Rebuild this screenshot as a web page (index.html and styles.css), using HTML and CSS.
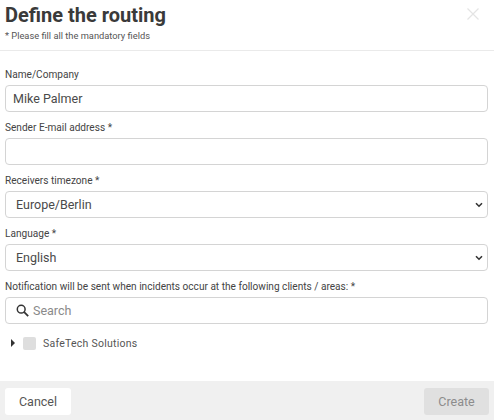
FILE: index.html
```html
<!DOCTYPE html>
<html lang="en">
<head>
    <meta charset="UTF-8">
    <meta name="viewport" content="width=device-width, initial-scale=1.0">
    <title>Define the routing</title>
    <link rel="stylesheet" href="styles.css">
</head>
<body>
    <div class="modal">
        <div class="modal-header">
            <div>
                <h1>Define the routing</h1>
                <p class="hint">* Please fill all the mandatory fields</p>
            </div>
            <svg class="close-icon" width="12" height="12" viewBox="0 0 12 12">
                <path d="M0.5 0.5L11.5 11.5M11.5 0.5L0.5 11.5" stroke="#e4e4e4" stroke-width="1.2" fill="none"/>
            </svg>
        </div>

        <div class="modal-body">
            <div class="field">
                <label>Name/Company</label>
                <input class="control" type="text" value="Mike Palmer">
            </div>
            <div class="field">
                <label>Sender E-mail address *</label>
                <input class="control" type="text">
            </div>
            <div class="field">
                <label>Receivers timezone *</label>
                <div class="control select-box">
                    <span>Europe/Berlin</span>
                    <svg width="8" height="6" viewBox="0 0 8 6"><path d="M1 1.2L4 4.2L7 1.2" stroke="#333" stroke-width="1.6" fill="none"/></svg>
                </div>
            </div>
            <div class="field">
                <label>Language *</label>
                <div class="control select-box">
                    <span>English</span>
                    <svg width="8" height="6" viewBox="0 0 8 6"><path d="M1 1.2L4 4.2L7 1.2" stroke="#333" stroke-width="1.6" fill="none"/></svg>
                </div>
            </div>
            <div class="field">
                <label>Notification will be sent when incidents occur at the following clients / areas: *</label>
                <div class="control search-box">
                    <svg width="13" height="13" viewBox="0 0 13 13"><circle cx="5.2" cy="5.2" r="3.9" stroke="#333" stroke-width="1.5" fill="none"/><path d="M8.2 8.2L12.2 12.2" stroke="#333" stroke-width="1.8"/></svg>
                    <span>Search</span>
                </div>
            </div>
            <div class="tree-row">
                <span class="caret"></span>
                <span class="checkbox"></span>
                <span class="tree-label">SafeTech Solutions</span>
            </div>
        </div>

        <div class="modal-footer">
            <button class="btn">Cancel</button>
            <button class="btn btn-disabled">Create</button>
        </div>
    </div>
</body>
</html>
```

FILE: styles.css
```css
body {
    margin: 0;
    font-family: 'Roboto', 'Liberation Sans', sans-serif;
    color: #444;
    background-color: #fff;
}

.modal {
    width: 494px;
    height: 420px;
    display: flex;
    flex-direction: column;
    overflow: hidden;
}

.modal-header {
    height: 51px;
    box-sizing: border-box;
    border-bottom: 1px solid #eaeaea;
    padding: 0 15px 0 5px;
    display: flex;
    justify-content: space-between;
    align-items: flex-start;
}

h1 {
    margin: 1px 0 0;
    font-size: 20px;
    line-height: 28px;
    font-weight: 700;
    color: #3a3a3a;
}

.hint {
    margin: 1px 0 0;
    font-size: 9.3px;
    line-height: 12px;
    color: #555;
}

.close-icon {
    margin-top: 8px;
}

.modal-body {
    flex: 1;
    padding: 17px 6px 0 5px;
}

.field {
    margin-bottom: 9px;
}

label {
    display: block;
    font-size: 10.1px;
    line-height: 13px;
    margin-bottom: 4px;
    color: #444;
}

.control {
    display: flex;
    align-items: center;
    width: 100%;
    height: 27px;
    box-sizing: border-box;
    border: 1px solid #d4d4d4;
    border-radius: 4px;
    background-color: #fff;
    font-family: inherit;
    font-size: 12.5px;
    color: #4a4a4a;
    outline: none;
}

input.control {
    padding: 0 7px;
}

.select-box {
    justify-content: space-between;
    padding: 0 4px 0 10px;
}

.search-box {
    gap: 4px;
    padding: 0 10px;
}

.search-box span {
    color: #8a8a8a;
}

.tree-row {
    display: flex;
    align-items: center;
    height: 14px;
    margin-top: 12px;
    padding-left: 6px;
}

.caret {
    width: 0;
    height: 0;
    border-left: 4px solid #333;
    border-top: 4px solid transparent;
    border-bottom: 4px solid transparent;
}

.checkbox {
    width: 13px;
    height: 13px;
    margin-left: 8px;
    background-color: #dedede;
    border-radius: 2px;
}

.tree-label {
    margin-left: 7px;
    font-size: 10.5px;
    letter-spacing: 0.25px;
    color: #555;
}

.modal-footer {
    height: 39px;
    box-sizing: border-box;
    background-color: #f0f0f0;
    padding: 7px 5px 0;
    display: flex;
    justify-content: space-between;
    align-items: flex-start;
}

.btn {
    height: 27px;
    width: 66px;
    border: none;
    border-radius: 3px;
    background-color: #fff;
    font-family: inherit;
    font-size: 12.5px;
    color: #555;
}

.btn-disabled {
    width: 65px;
    background-color: #e0e0e0;
    color: #8c8c8c;
}
```
